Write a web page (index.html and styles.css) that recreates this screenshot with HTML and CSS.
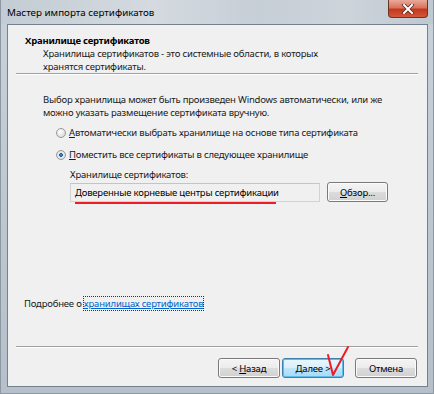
FILE: index.html
```html
<!DOCTYPE html>
<html lang="ru">
<head>
    <meta charset="UTF-8">
    <title>Мастер импорта сертификатов</title>
    <link rel="stylesheet" href="styles.css">
</head>
<body>
    <div class="window">
        <div class="titlebar">
            <span class="title">Мастер импорта сертификатов</span>
            <div class="close-btn">
                <svg width="14" height="10" viewBox="0 0 14 10">
                    <path d="M3 1 L11 9 M11 1 L3 9" stroke="#5a2a22" stroke-width="3.6" stroke-linecap="square"/>
                    <path d="M3 1 L11 9 M11 1 L3 9" stroke="#ffffff" stroke-width="2" stroke-linecap="square"/>
                </svg>
            </div>
        </div>

        <div class="client">
            <div class="header">
                <div class="header-title">Хранилище сертификатов</div>
                <div class="header-desc">Хранилища сертификатов - это системные области, в которых<br>хранятся сертификаты.</div>
            </div>
            <div class="separator"></div>

            <div class="content">
                <p class="intro">Выбор хранилища может быть произведен Windows автоматически, или же<br>можно указать размещение сертификата вручную.</p>

                <div class="radio-row">
                    <span class="radio"></span>
                    <span><u>А</u>втоматически выбрать хранилище на основе типа сертификата</span>
                </div>
                <div class="radio-row">
                    <span class="radio checked"></span>
                    <span><u>П</u>оместить все сертификаты в следующее хранилище</span>
                </div>

                <div class="store">
                    <div class="store-label">Хранилище сертификатов:</div>
                    <div class="store-row">
                        <div class="store-input">Доверенные корневые центры сертификации</div>
                        <button class="btn browse"><u>О</u>бзор...</button>
                    </div>
                </div>
            </div>

            <div class="more">Подробнее о <span class="link">хранилищах сертификатов</span></div>

            <div class="separator"></div>
            <div class="footer">
                <button class="btn">&lt; <u>Н</u>азад</button>
                <button class="btn default"><u>Д</u>алее &gt;</button>
                <button class="btn cancel">Отмена</button>
            </div>
        </div>

        <!-- hand-drawn marks on top of the screenshot -->
        <svg class="marks" width="434" height="394" viewBox="0 0 434 394">
            <line x1="74" y1="203" x2="275" y2="203" stroke="#ee1c24" stroke-width="2"/>
            <polyline points="327,355 332,375 347,347" fill="none" stroke="#ee1c24" stroke-width="2" stroke-linejoin="round" stroke-linecap="round"/>
        </svg>
    </div>
</body>
</html>
```

FILE: styles.css
```css
body {
    margin: 0;
    background: #c3ccd5;
    font-family: "Noto Sans", "Open Sans", sans-serif;
    font-size: 9.5px;
    letter-spacing: -0.2px;
    color: #1a1a1a;
}

.window {
    position: relative;
    width: 434px;
    height: 394px;
    display: flex;
    flex-direction: column;
    background: linear-gradient(to bottom, #c9d2da 0%, #bcc6cf 60%, #b6c0ca 100%);
    box-sizing: border-box;
    border: 1px solid #8d98a3;
    border-top: none;
}

.titlebar {
    height: 24px;
    display: flex;
    align-items: flex-start;
    justify-content: space-between;
    padding-left: 6px;
    background: linear-gradient(to right, #c3ccd4 0%, #d4dadf 35%, #c6ced6 60%, #cdd4da 80%, #bec8d1 100%);
}

.title {
    font-size: 9.8px;
    letter-spacing: 0;
    line-height: 14px;
    margin-top: 6px;
    color: #000;
}

.close-btn {
    width: 40px;
    height: 18px;
    margin-right: 5px;
    display: flex;
    align-items: center;
    justify-content: center;
    background: linear-gradient(to bottom, #e9a99a 0%, #d9745e 45%, #c4381f 55%, #d2583c 100%);
    border: 1px solid #6d3328;
    border-top: none;
    border-radius: 0 0 4px 4px;
    box-sizing: border-box;
}

.client {
    flex: 1;
    margin: 0 5px 6px 6px;
    background: #f0f0f0;
    border: 1px solid #75818d;
    display: flex;
    flex-direction: column;
}

.header {
    padding: 9px 0 0 17px;
    line-height: 13px;
}

.header-title {
    font-weight: bold;
    color: #000;
}

.header-desc {
    padding-left: 18px;
}

.separator {
    height: 1px;
    margin: 0 9px 0 8px;
    background: #a0a0a0;
    border-bottom: 1px solid #ffffff;
}

.content {
    padding-left: 35px;
    line-height: 13px;
}

.intro {
    margin: 18px 0 7px;
}

.radio-row {
    display: flex;
    align-items: center;
    gap: 3px;
    padding-left: 13px;
    height: 13px;
    margin-bottom: 9px;
}

.radio {
    width: 10px;
    height: 10px;
    border-radius: 50%;
    box-sizing: border-box;
    border: 1px solid #9a9a9a;
    background: radial-gradient(circle at 40% 35%, #ffffff 0%, #e4e4e4 55%, #cfcfcf 100%);
}

.radio.checked {
    background: radial-gradient(circle at 50% 50%, #3b8ed4 0%, #1c5fa6 32%, #e9e9e9 38%, #d6d6d6 100%);
}

.store {
    padding-left: 27px;
    margin-top: -2px;
}

.store-label {
    line-height: 13px;
}

.store-row {
    display: flex;
    align-items: center;
    gap: 7px;
    margin-top: 1px;
}

.store-input {
    width: 250px;
    height: 19px;
    box-sizing: border-box;
    padding-left: 4px;
    line-height: 17px;
    border: 1px solid #d2d2d2;
    border-top-color: #c4c4c4;
    background: #f0f0f0;
    color: #000;
}

.btn {
    width: 62px;
    height: 20px;
    padding: 0;
    font-family: inherit;
    font-size: 9.5px;
    letter-spacing: -0.2px;
    color: #000;
    border: 1px solid #7a7a7a;
    border-radius: 3px;
    background: linear-gradient(to bottom, #f4f4f4 0%, #ececec 48%, #dcdcdc 52%, #d0d0d0 100%);
    box-shadow: inset 0 0 0 1px #fbfbfb;
}

.btn.default {
    border-color: #3c7fb1;
    background: linear-gradient(to bottom, #eaf6fd 0%, #d9f0fc 48%, #bee6fd 52%, #a7d9f5 100%);
    box-shadow: inset 0 0 0 1px #5fbbeb;
}

.browse {
    width: 61px;
}

.more {
    margin-top: auto;
    padding-left: 16px;
    line-height: 13px;
    margin-bottom: 36px;
}

.link {
    color: #0066cc;
    text-decoration: underline;
    outline: 1px dotted #333;
}

.footer {
    display: flex;
    justify-content: flex-end;
    align-items: center;
    padding: 10px 10px 8px 0;
    gap: 2px;
}

.footer .cancel {
    margin-left: 9px;
}

.marks {
    position: absolute;
    left: 0;
    top: 0;
    pointer-events: none;
}
```
